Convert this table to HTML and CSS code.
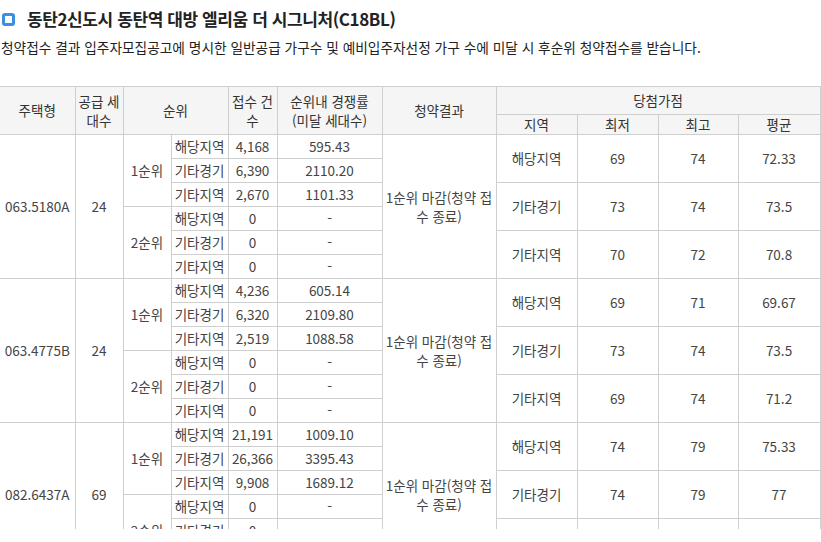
FILE: index.html
```html
<!DOCTYPE html>
<html lang="ko">
<head>
<meta charset="utf-8">
<link rel="stylesheet" href="styles.css">
</head>
<body>
<div class="page">
  <h2 class="title"><span class="ico"></span>동탄2신도시 동탄역 대방 엘리움 더 시그니처(C18BL)</h2>
  <p class="desc">청약접수 결과 입주자모집공고에 명시한 일반공급 가구수 및 예비입주자선정 가구 수에 미달 시 후순위 청약접수를 받습니다.</p>
  <table class="tbl">
    <colgroup>
      <col class="c1"><col class="c2"><col class="c3"><col class="c4"><col class="c5"><col class="c6"><col class="c7"><col class="c8"><col class="c9"><col class="c10"><col class="c11">
    </colgroup>
    <thead>
      <tr class="h1">
        <th rowspan="2" class="first">주택형</th>
        <th rowspan="2">공급 세<br>대수</th>
        <th rowspan="2" colspan="2">순위</th>
        <th rowspan="2">접수 건<br>수</th>
        <th rowspan="2">순위내 경쟁률<br>(미달 세대수)</th>
        <th rowspan="2">청약결과</th>
        <th colspan="4">당첨가점</th>
      </tr>
      <tr class="h2">
        <th>지역</th><th>최저</th><th>최고</th><th>평균</th>
      </tr>
    </thead>
    <tbody>
      <tr>
        <td rowspan="6" class="first">063.5180A</td>
        <td rowspan="6">24</td>
        <td rowspan="3">1순위</td>
        <td>해당지역</td><td>4,168</td><td>595.43</td>
        <td rowspan="6">1순위 마감(청약 접<br>수 종료)</td>
        <td rowspan="2">해당지역</td><td rowspan="2">69</td><td rowspan="2">74</td><td rowspan="2">72.33</td>
      </tr>
      <tr><td>기타경기</td><td>6,390</td><td>2110.20</td></tr>
      <tr>
        <td>기타지역</td><td>2,670</td><td>1101.33</td>
        <td rowspan="2">기타경기</td><td rowspan="2">73</td><td rowspan="2">74</td><td rowspan="2">73.5</td>
      </tr>
      <tr><td rowspan="3">2순위</td><td>해당지역</td><td>0</td><td>-</td></tr>
      <tr>
        <td>기타경기</td><td>0</td><td>-</td>
        <td rowspan="2">기타지역</td><td rowspan="2">70</td><td rowspan="2">72</td><td rowspan="2">70.8</td>
      </tr>
      <tr><td>기타지역</td><td>0</td><td>-</td></tr>

      <tr>
        <td rowspan="6" class="first">063.4775B</td>
        <td rowspan="6">24</td>
        <td rowspan="3">1순위</td>
        <td>해당지역</td><td>4,236</td><td>605.14</td>
        <td rowspan="6">1순위 마감(청약 접<br>수 종료)</td>
        <td rowspan="2">해당지역</td><td rowspan="2">69</td><td rowspan="2">71</td><td rowspan="2">69.67</td>
      </tr>
      <tr><td>기타경기</td><td>6,320</td><td>2109.80</td></tr>
      <tr>
        <td>기타지역</td><td>2,519</td><td>1088.58</td>
        <td rowspan="2">기타경기</td><td rowspan="2">73</td><td rowspan="2">74</td><td rowspan="2">73.5</td>
      </tr>
      <tr><td rowspan="3">2순위</td><td>해당지역</td><td>0</td><td>-</td></tr>
      <tr>
        <td>기타경기</td><td>0</td><td>-</td>
        <td rowspan="2">기타지역</td><td rowspan="2">69</td><td rowspan="2">74</td><td rowspan="2">71.2</td>
      </tr>
      <tr><td>기타지역</td><td>0</td><td>-</td></tr>

      <tr>
        <td rowspan="6" class="first">082.6437A</td>
        <td rowspan="6">69</td>
        <td rowspan="3">1순위</td>
        <td>해당지역</td><td>21,191</td><td>1009.10</td>
        <td rowspan="6">1순위 마감(청약 접<br>수 종료)</td>
        <td rowspan="2">해당지역</td><td rowspan="2">74</td><td rowspan="2">79</td><td rowspan="2">75.33</td>
      </tr>
      <tr><td>기타경기</td><td>26,366</td><td>3395.43</td></tr>
      <tr>
        <td>기타지역</td><td>9,908</td><td>1689.12</td>
        <td rowspan="2">기타경기</td><td rowspan="2">74</td><td rowspan="2">79</td><td rowspan="2">77</td>
      </tr>
      <tr><td rowspan="3">2순위</td><td>해당지역</td><td>0</td><td>-</td></tr>
      <tr>
        <td>기타경기</td><td>0</td><td>-</td>
        <td rowspan="2">기타지역</td><td rowspan="2">74</td><td rowspan="2">75</td><td rowspan="2">74.5</td>
      </tr>
      <tr><td>기타지역</td><td>0</td><td>-</td></tr>
    </tbody>
  </table>
</div>
</body>
</html>
```
FILE: styles.css
```css
html, body {
  margin: 0;
  padding: 0;
  background: #fff;
}
.page {
  width: 821px;
  height: 529px;
  overflow: hidden;
  font-family: "Noto Sans CJK KR", "Noto Sans", sans-serif;
  color: #333;
}
.title {
  display: flex;
  align-items: center;
  gap: 12px;
  margin: 0;
  padding: 7px 0 0 2px;
  height: 24px;
  font-size: 17px;
  font-weight: bold;
  letter-spacing: -0.4px;
  color: #222;
  line-height: 20px;
}
.ico {
  box-sizing: border-box;
  width: 13px;
  height: 13px;
  border-radius: 3px;
  border: 3px solid #3b8fe0;
  background: #fff;
  flex: none;
}
.desc {
  margin: 0;
  padding: 5px 0 0 1px;
  font-size: 13.7px;
  line-height: 22px;
  color: #222;
}
.tbl {
  margin-top: 28px;
  width: 820px;
  table-layout: fixed;
  border-collapse: collapse;
  font-size: 13.5px;
  color: #444;
}
.c1 { width: 75px; }
.c2 { width: 48px; }
.c3 { width: 48px; }
.c4 { width: 57px; }
.c5 { width: 49px; }
.c6 { width: 105px; }
.c7 { width: 114px; }
.c8 { width: 81px; }
.c9 { width: 81px; }
.c10 { width: 80px; }
.c11 { width: 82px; }
.tbl th, .tbl td {
  border: 1px solid #cfcfcf;
  padding: 0;
  text-align: center;
  vertical-align: middle;
  line-height: 19px;
  white-space: nowrap;
}
.tbl th {
  background: #f5f5f5;
  font-weight: normal;
  color: #333;
}
.tbl .first { border-left: none; }
.h1 { height: 28px; }
.h2 { height: 20px; }
.tbl tbody tr { height: 24px; }
```
